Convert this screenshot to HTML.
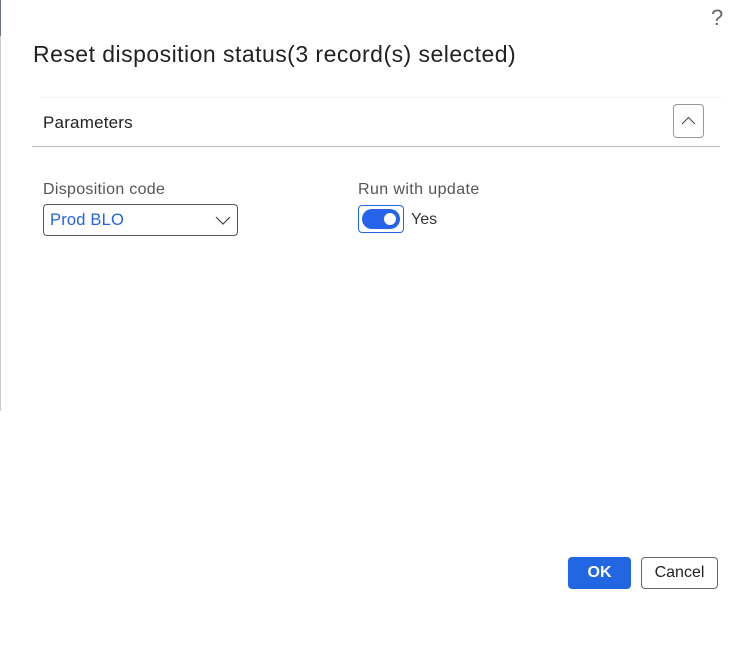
<!DOCTYPE html>
<html><head><meta charset="utf-8"><style>
*{margin:0;padding:0;box-sizing:border-box}
body{width:742px;height:655px;background:#fff;font-family:"Liberation Sans",sans-serif;position:relative;overflow:hidden;color:#242424}
.l{position:absolute;left:0;width:1px}
.a{position:absolute;white-space:nowrap}
</style></head><body>
<div class="l" style="top:0;height:36px;background:#6b7280"></div>
<div class="l" style="top:36px;height:375px;background:#ccc"></div>
<div class="a" style="left:711px;top:5px;font-size:22px;color:#666;font-weight:300">?</div>
<div class="a" style="left:33px;top:41px;font-size:23px;color:#222;letter-spacing:0.47px">Reset disposition status(3 record(s) selected)</div>
<div class="a" style="left:40px;top:97px;width:681px;height:1px;background:#f3f3f3"></div>
<div class="a" style="left:43px;top:113px;font-size:17px;color:#222;letter-spacing:0.2px">Parameters</div>
<div class="a" style="left:673px;top:104px;width:31px;height:34px;border:1px solid #999;border-radius:4px">
<svg width="29" height="32" viewBox="0 0 29 32"><path d="M8 19 L14.5 12.5 L21 19" fill="none" stroke="#444" stroke-width="1"/></svg></div>
<div class="a" style="left:32px;top:146px;width:688px;height:1px;background:#bbb"></div>
<div class="a" style="left:43px;top:181px;font-size:16px;color:#555;letter-spacing:0.3px">Disposition code</div>
<div class="a" style="left:43px;top:204px;width:195px;height:32px;border:1px solid #555;border-radius:4px">
<div class="a" style="left:6px;top:6px;font-size:16.5px;color:#2563eb;letter-spacing:0.2px">Prod BLO</div>
<svg class="a" style="left:170px;top:8px" width="18" height="14" viewBox="0 0 18 14"><path d="M2 4 L9 11 L16 4" fill="none" stroke="#444" stroke-width="1.2"/></svg></div>
<div class="a" style="left:358px;top:181px;font-size:16px;color:#555;letter-spacing:0.4px">Run with update</div>
<div class="a" style="left:358px;top:205px;width:46px;height:28px;border:1px solid #2563eb;border-radius:4px">
<div class="a" style="left:3px;top:3px;width:38px;height:20px;background:#2563eb;border-radius:10px"><div class="a" style="left:22px;top:4px;width:12px;height:12px;background:#fff;border-radius:50%"></div></div></div>
<div class="a" style="left:411px;top:211px;font-size:16px;color:#333">Yes</div>
<div class="a" style="left:568px;top:557px;width:63px;height:32px;background:#2266e3;border-radius:4px;color:#fff;font-weight:bold;font-size:16px;text-align:center;line-height:32px">OK</div>
<div class="a" style="left:641px;top:557px;width:77px;height:32px;border:1px solid #666;border-radius:4px;font-size:16px;text-align:center;line-height:30px;color:#222">Cancel</div>
</body></html>
